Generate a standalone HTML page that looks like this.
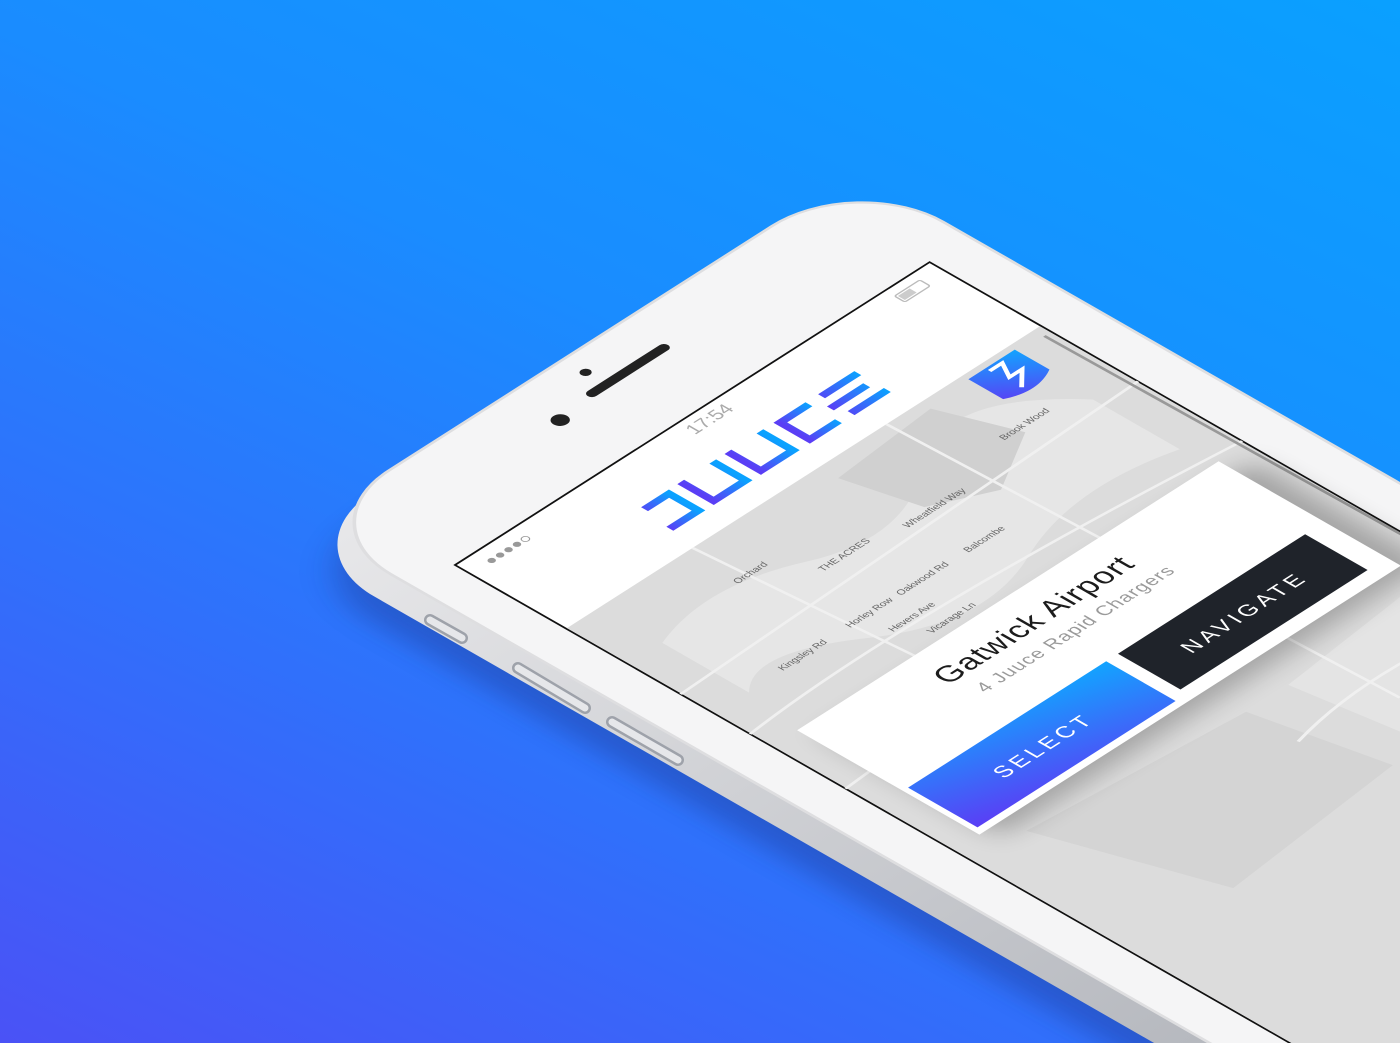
<!DOCTYPE html>
<html><head><meta charset="utf-8"><style>
html,body{margin:0;padding:0;width:1400px;height:1043px;overflow:hidden}
body{background:linear-gradient(205deg,#0aa0ff 0%,#1a8cff 40%,#3070fb 70%,#4a52f6 100%);position:relative}
svg{display:block;position:absolute;left:0;top:0}
text{font-family:"Liberation Sans",sans-serif}
</style></head><body>
<svg width="1400" height="1043" viewBox="0 0 1400 1043">
<defs>
<linearGradient id="lg" x1="0" y1="0" x2="1" y2="0"><stop offset="0" stop-color="#5a3ef5"/><stop offset="1" stop-color="#0aa2ff"/></linearGradient>
<linearGradient id="sg" x1="0" y1="1" x2="1" y2="0"><stop offset="0" stop-color="#5a3ef5"/><stop offset="1" stop-color="#12a4ff"/></linearGradient>
<linearGradient id="edge" x1="0" y1="0" x2="0" y2="1"><stop offset="0" stop-color="#e8e8ea"/><stop offset="1" stop-color="#9fa3ab"/></linearGradient>
<filter id="sh" x="-20%" y="-20%" width="140%" height="140%"><feGaussianBlur stdDeviation="14"/></filter>
</defs>
<g transform="matrix(0.843,-0.538,0.868,0.497,440,610)" opacity="0.35" filter="url(#sh)">
<rect x="-50" y="-130" width="660" height="1500" rx="100" fill="#1a2a80"/>
</g>
<g transform="matrix(0.843,-0.538,0.868,0.497,445,588)">
<rect x="-48" y="-135" width="660" height="1500" rx="100" fill="url(#edge)"/>
</g>
<g transform="matrix(0.843,-0.538,0.868,0.497,455,565)">
<rect x="-45" y="-130" width="655" height="1500" rx="100" fill="#f5f5f6" stroke="#dedee0" stroke-width="3"/>
<circle cx="201" cy="-74" r="8" fill="#222"/>
<circle cx="262" cy="-104" r="5" fill="#222"/>
<line x1="245" y1="-80" x2="330" y2="-80" stroke="#222" stroke-width="10" stroke-linecap="round"/>
<rect x="0" y="0" width="563" height="1300" fill="#fff" stroke="#111" stroke-width="2"/>
<rect x="1" y="128" width="561" height="1170" fill="#dcdcdc"/>
<path d="M40 200 Q120 170 200 210 T360 190 T520 230 L520 330 Q420 300 330 340 T160 320 T40 300Z" fill="#e6e6e6"/>
<path d="M300 150 L420 140 L450 220 L380 260 L320 230Z" fill="#d0d0d0"/>
<path d="M60 600 L300 620 L330 760 L120 780Z" fill="#d4d4d4"/>
<path d="M350 620 L540 600 L550 800 L380 820Z" fill="#e4e4e4"/>
<g stroke="#f0f0f0" stroke-width="3" fill="none">
<path d="M0 260 L563 240"/><path d="M150 128 L170 380"/><path d="M0 340 Q200 320 563 360"/>
<path d="M380 128 L400 700"/><path d="M0 450 L300 430"/><path d="M300 680 Q420 650 563 690"/>
</g>
<path d="M555 140 L563 700" stroke="#999" stroke-width="3"/>
<g fill="#666" font-size="10">
<text x="140" y="190">Orchard</text><text x="200" y="230">THE ACRES</text><text x="290" y="240">Wheatfield Way</text>
<text x="430" y="215">Brook Wood</text><text x="80" y="300">Kingsley Rd</text><text x="160" y="300">Horley Row</text>
<text x="220" y="300">Oakwood Rd</text><text x="300" y="300">Balcombe</text><text x="180" y="330">Hevers Ave</text>
<text x="200" y="355">Vicarage Ln</text><text x="470" y="640">Crawley Sewage</text><text x="500" y="700">Gatwick Rd</text>
</g>
<path d="M470 135 L525 135 L525 175 Q497 190 470 175Z" fill="url(#sg)"/>
<path d="M490 140 L505 140 L495 158 L510 158 L492 175" stroke="#fff" stroke-width="4" fill="none"/>
<g fill="#999"><circle cx="25" cy="18" r="3.5"/><circle cx="35" cy="18" r="3.5"/><circle cx="45" cy="18" r="3.5"/><circle cx="55" cy="18" r="3.5"/><circle cx="65" cy="18" r="3.5" fill="none" stroke="#999"/></g>
<text x="262" y="22" font-size="19" fill="#aaa">17:54</text>
<rect x="510" y="11" width="30" height="12" rx="2" fill="none" stroke="#bbb" stroke-width="1.5"/>
<rect x="512" y="13" width="14" height="8" fill="#ccc"/>
<g transform="translate(156,58)" stroke="url(#lg)" stroke-width="8" fill="none">
<path d="M5 4 H34 V38 H0"/><path d="M52 0 V38 H90 V0"/><path d="M108 0 V38 H146 V0"/>
<path d="M200 4 H166 V38 H200"/><path d="M215 4 H258 M208 21 H251 M215 38 H258"/>
</g>
<rect x="40" y="385" width="510" height="205" fill="#000" opacity="0.25" filter="url(#sh)"/>
<rect x="30" y="365" width="500" height="210" fill="#fff"/>
<text x="159" y="414" font-size="31" fill="#1c1c1c" letter-spacing="1">Gatwick Airport</text>
<text x="172" y="444" font-size="19" fill="#9a9a9a" letter-spacing="1">4 Juuce Rapid Chargers</text>
<rect x="36" y="487" width="235" height="80" fill="url(#sg)"/>
<text x="153" y="537" font-size="22" fill="#fff" text-anchor="middle" letter-spacing="4">SELECT</text>
<rect x="285" y="487" width="222" height="72" fill="#1f232a"/>
<text x="396" y="532" font-size="22" fill="#fff" text-anchor="middle" letter-spacing="4">NAVIGATE</text>
<rect x="440" y="780" width="123" height="80" fill="#fafafa"/>
</g>
<g stroke-linecap="round">
<line x1="430" y1="620" x2="462" y2="638" stroke="#9ea2aa" stroke-width="12"/>
<line x1="518" y1="668" x2="585" y2="708" stroke="#9ea2aa" stroke-width="12"/>
<line x1="612" y1="722" x2="678" y2="760" stroke="#9ea2aa" stroke-width="12"/>
<line x1="430" y1="620" x2="462" y2="638" stroke="#e6e7ea" stroke-width="7"/>
<line x1="518" y1="668" x2="585" y2="708" stroke="#e6e7ea" stroke-width="7"/>
<line x1="612" y1="722" x2="678" y2="760" stroke="#e6e7ea" stroke-width="7"/>
</g>
</svg>
</body></html>
